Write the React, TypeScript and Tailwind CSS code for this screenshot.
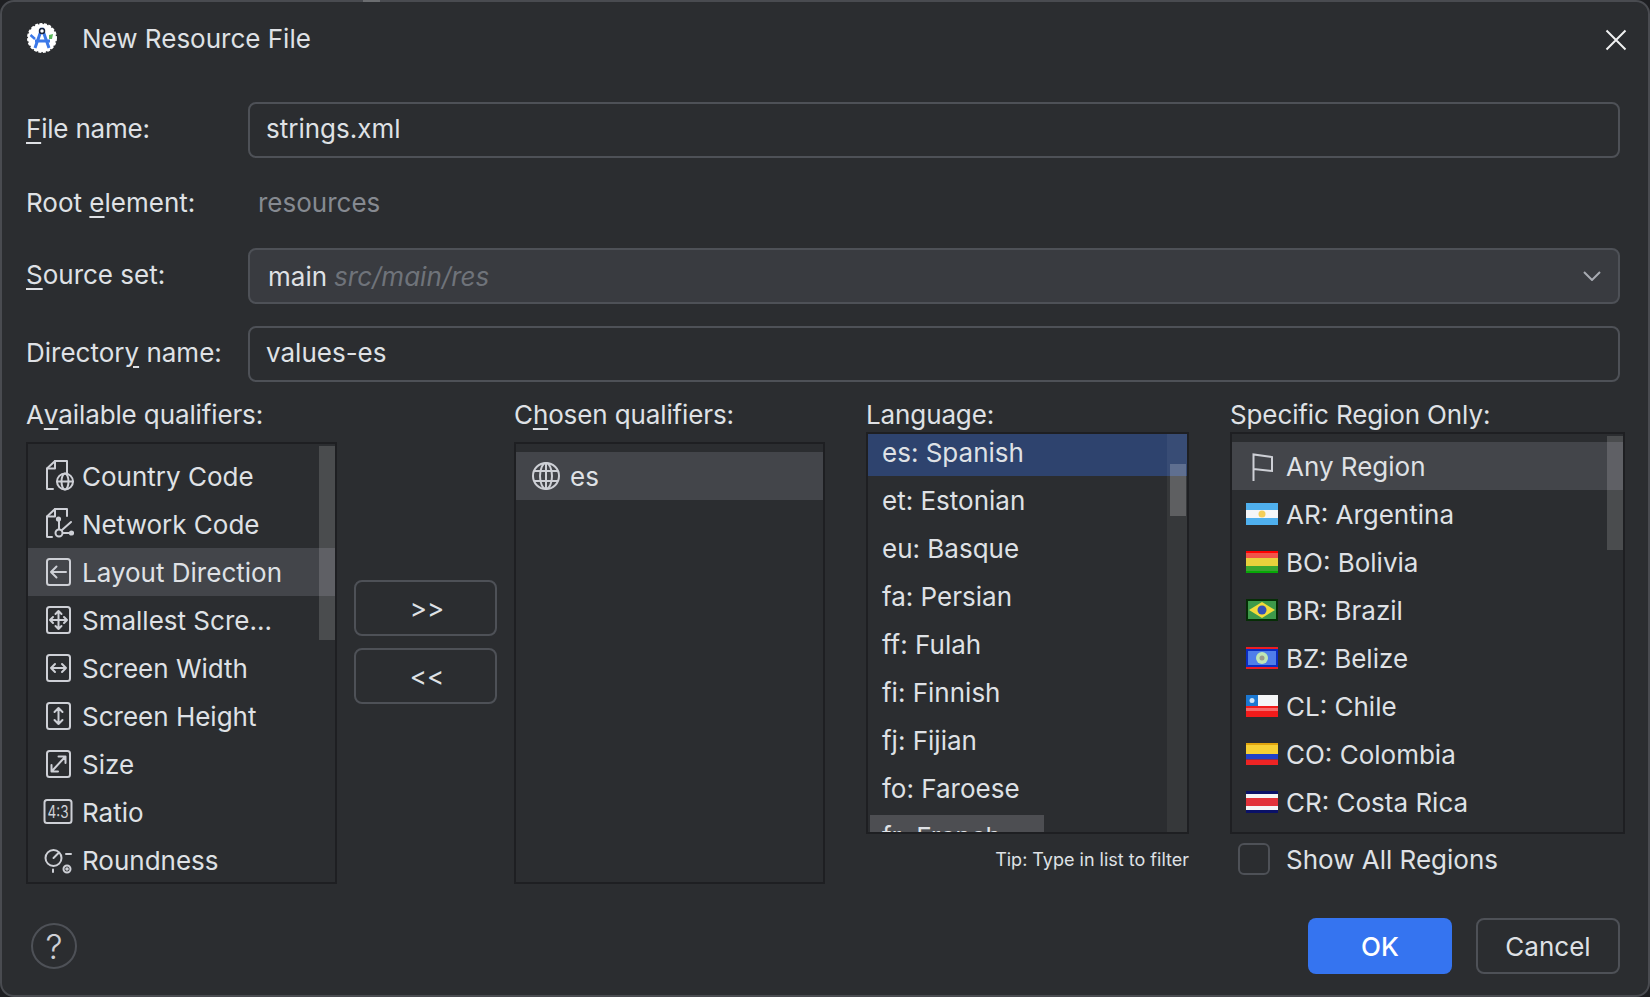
import type { ReactNode } from 'react'

const S = { fill: 'none', stroke: '#ced0d6', strokeWidth: 2, strokeLinecap: 'round', strokeLinejoin: 'round' } as const

function Ico({ children }: { children: ReactNode }) {
  return (
    <svg width="32" height="32" viewBox="0 0 32 32" className="shrink-0" aria-hidden>
      <g {...S}>{children}</g>
    </svg>
  )
}

const Frame = () => <rect x="5" y="3" width="23" height="26" rx="2.5" />

const icons: Record<string, ReactNode> = {
  country: (
    <Ico>
      <path d="M25 13V1H13L5 8.5V28.5a.5.5 0 0 0 .5.5H11" />
      <path d="M13 1v7.5H5" />
      <circle cx="23" cy="21.5" r="8" />
      <ellipse cx="23" cy="21.5" rx="3.5" ry="8" />
      <path d="M15 21.5h16" />
    </Ico>
  ),
  network: (
    <Ico>
      <path d="M25 8V1H13L5 8.5V28.5a.5.5 0 0 0 .5.5H10" />
      <path d="M13 1v7.5H5" />
      <circle cx="17" cy="25" r="3.5" />
      <path d="M17 21V11M20 22l9-8M21 25h8" />
      <circle cx="16.5" cy="11" r="1.6" fill="#ced0d6" />
      <circle cx="29.5" cy="25" r="1.6" fill="#ced0d6" />
    </Ico>
  ),
  layout: (
    <Ico>
      <Frame />
      <path d="M9 16h15M14.5 10.5 9 16l5.500 5.500" />
    </Ico>
  ),
  smallest: (
    <Ico>
      <Frame />
      <path d="M8 16h17M16.500 7v18M11 13l-3 3 3 3M22 13l3 3-3 3M13.500 10l3-3 3 3M13.500 22l3 3 3-3" />
    </Ico>
  ),
  width: (
    <Ico>
      <Frame />
      <path d="M9 16h15M13 12l-4 4 4 4M20 12l4 4-4 4" />
    </Ico>
  ),
  height: (
    <Ico>
      <Frame />
      <path d="M16.500 8v16M12.500 12l4-4 4 4M12.500 20l4 4 4-4" />
    </Ico>
  ),
  size: (
    <Ico>
      <Frame />
      <path d="M10 23 23 9M16.500 8.500H23.500V15M9.500 17v6.500H16" />
    </Ico>
  ),
  ratio: (
    <Ico>
      <rect x="2.500" y="4" width="27" height="23" rx="2.500" />
      <text x="16" y="21.500" textAnchor="middle" stroke="none" fill="#ced0d6" fontFamily="Inter, sans-serif" fontSize="17" textLength="21" lengthAdjust="spacingAndGlyphs">
        4:3
      </text>
    </Ico>
  ),
  round: (
    <Ico>
      <circle cx="11.500" cy="14" r="8" />
      <path d="M11.500 14l5-5M11 25.500V28M24 10h5" />
      <circle cx="25" cy="25" r="3.500" />
      <circle cx="25" cy="25" r="0.800" fill="#ced0d6" />
    </Ico>
  ),
}

const qualifiers = [
  ['country', 'Country Code'],
  ['network', 'Network Code'],
  ['layout', 'Layout Direction'],
  ['smallest', 'Smallest Scre...'],
  ['width', 'Screen Width'],
  ['height', 'Screen Height'],
  ['size', 'Size'],
  ['ratio', 'Ratio'],
  ['round', 'Roundness'],
]

const languages = ['es: Spanish', 'et: Estonian', 'eu: Basque', 'fa: Persian', 'ff: Fulah', 'fi: Finnish', 'fj: Fijian', 'fo: Faroese']

function Flag({ code }: { code: string }) {
  return (
    <svg width="32" height="22" viewBox="0 0 32 22" className="shrink-0" aria-hidden>
      {code === 'AR' && (
        <>
          <rect width="32" height="22" fill="#4fb0ee" />
          <rect y="7" width="32" height="8" fill="#f4f6f8" />
          <circle cx="16" cy="11" r="3.500" fill="#f3cf5a" />
        </>
      )}
      {code === 'BO' && (
        <>
          <rect width="32" height="22" fill="#e8d13c" />
          <rect width="32" height="7" fill="#f0534a" />
          <rect y="15" width="32" height="7" fill="#3aa52f" />
          <rect width="32" height="2" fill="#ff0000" />
          <rect y="20" width="32" height="2" fill="#06a806" />
        </>
      )}
      {code === 'BR' && (
        <>
          <rect width="32" height="22" fill="#062d06" />
          <rect x="2" y="2" width="28" height="18" fill="#3d9a4a" />
          <path d="M16 3 29 11 16 19 3 11Z" fill="#f2dc3a" />
          <circle cx="16" cy="11" r="4.500" fill="#3450b8" />
        </>
      )}
      {code === 'BZ' && (
        <>
          <rect width="32" height="22" fill="#ec1c24" />
          <rect y="2" width="32" height="18" fill="#0a2cc0" />
          <rect x="2" y="4" width="28" height="14" fill="#4f7eea" />
          <circle cx="16" cy="11" r="6" fill="#bfe6b4" />
          <circle cx="16" cy="11" r="2.500" fill="#9a9a8c" />
        </>
      )}
      {code === 'CL' && (
        <>
          <rect width="32" height="11" fill="#f4f5f6" />
          <rect y="11" width="32" height="11" fill="#f21b1b" />
          <rect x="0" y="0" width="12" height="11" fill="#1b78d2" />
          <circle cx="6" cy="5.500" r="2.500" fill="#cfe4f7" />
          <rect y="13" width="32" height="3" fill="#f56a6a" />
        </>
      )}
      {code === 'CO' && (
        <>
          <rect width="32" height="11" fill="#f6cf35" />
          <rect width="32" height="2" fill="#e0a40e" />
          <rect y="11" width="32" height="5.500" fill="#2140c8" />
          <rect y="16.500" width="32" height="5.500" fill="#ee2424" />
        </>
      )}
      {code === 'CR' && (
        <>
          <rect width="32" height="22" fill="#0a1168" />
          <rect y="3" width="32" height="16" fill="#f4f5f6" />
          <rect y="7" width="32" height="8" fill="#e2323a" />
        </>
      )}
    </svg>
  )
}

const regions = [
  ['AR', 'AR: Argentina'],
  ['BO', 'BO: Bolivia'],
  ['BR', 'BR: Brazil'],
  ['BZ', 'BZ: Belize'],
  ['CL', 'CL: Chile'],
  ['CO', 'CO: Colombia'],
  ['CR', 'CR: Costa Rica'],
]

function Mn({ children }: { children: ReactNode }) {
  return <span className="underline decoration-2 underline-offset-[4px]">{children}</span>
}

function ColLabel({ children }: { children: ReactNode }) {
  return <div className="flex h-[32px] items-center whitespace-nowrap pb-[4px] tracking-[-0.12px]">{children}</div>
}

function Logo() {
  return (
    <svg width="32" height="32" viewBox="0 0 32 32" className="shrink-0" aria-hidden>
      <circle cx="16" cy="16" r="14" fill="#fff" stroke="#fff" strokeWidth="2" strokeDasharray="3 1.500" />
      <path d="M23 13l4-1-1 5-3 0Z" fill="#5cb85c" />
      <path d="M16 6 9 26M16 6l7 20M9 19h15" fill="none" stroke="#3b78e8" strokeWidth="3" />
      <path d="M4.500 13 9 17" stroke="#3b78e8" strokeWidth="2.500" />
      <circle cx="16" cy="9" r="2.500" fill="#fff" stroke="#16233f" strokeWidth="1.500" />
    </svg>
  )
}

export default function App() {
  return (
    <div className="h-[997px] w-[1650px] overflow-hidden bg-[#1e1f22] font-['Inter',sans-serif] text-[26px] text-[#dfe1e5]">
      <div className="relative flex h-full w-full flex-col rounded-[14px] border-2 border-[#494b50] bg-[#2b2d30] pl-[24px] pr-[28px]">
        <div className="absolute -top-[2px] left-[361px] h-[2px] w-[17px] bg-[#6b6d70]" />
        <div className="mb-[28px] flex h-[72px] items-center">
          <Logo />
          <span className="ml-[24px]">New Resource File</span>
          <svg width="22" height="22" viewBox="0 0 22 22" className="ml-auto mr-[-7px] mt-[4px]" aria-hidden>
            <path d="M1.500 1.500l19 19M20.500 1.500l-19 19" stroke="#f0f1f2" strokeWidth="2" />
          </svg>
        </div>

        <div className="flex h-[56px] items-center">
          <label className="w-[222px] pb-[4px] tracking-[-0.2px]">
            <Mn>F</Mn>ile name:
          </label>
          <div className="flex h-full flex-1 items-center rounded-[8px] border-2 border-[#4e5157] pb-[3px] pl-[16px]">strings.xml</div>
        </div>

        <div className="flex h-[90px] items-center">
          <label className="w-[222px] pb-[2px]">
            Root <Mn>e</Mn>lement:
          </label>
          <span className="ml-[10px] pb-[2px] text-[#868a91]">resources</span>
        </div>

        <div className="flex h-[56px] items-center">
          <label className="w-[222px] pb-[4px]">
            <Mn>S</Mn>ource set:
          </label>
          <div className="flex h-full flex-1 items-center rounded-[8px] border-2 border-[#4e5157] bg-[#393b40] pl-[18px] pr-[17px]">
            main <span className="ml-[7px] italic text-[#6f737a]">src/main/res</span>
            <svg width="18" height="10" viewBox="0 0 18 10" className="ml-auto" aria-hidden>
              <path d="M1 1l8 8 8-8" fill="none" stroke="#a8abb2" strokeWidth="2" />
            </svg>
          </div>
        </div>

        <div className="mt-[22px] flex h-[56px] items-center">
          <label className="w-[222px] pb-[4px]">
            Director<Mn>y</Mn> name:
          </label>
          <div className="flex h-full flex-1 items-center rounded-[8px] border-2 border-[#4e5157] pb-[3px] pl-[16px]">values-es</div>
        </div>

        <div className="mt-[18px] flex">
          <div className="w-[311px] flex-none">
            <ColLabel>
              A<Mn>v</Mn>ailable qualifiers:
            </ColLabel>
            <div className="relative mt-[10px] h-[442px] overflow-hidden border-2 border-[#1e1f22] pt-[8px]">
              {qualifiers.map(([key, label]) => (
                <div key={key} className={`flex h-[48px] items-center pl-[14px] ${key === 'layout' ? 'bg-[#43454a]' : ''}`}>
                  {icons[key]}
                  <span className="ml-[8px]">{label}</span>
                </div>
              ))}
              <div className="absolute right-0 top-[2px] h-[194px] w-[16px] bg-white/15" />
            </div>
          </div>

          <div className="ml-[17px] flex w-[143px] flex-none flex-col gap-[12px] pt-[180px]">
            <button className="h-[56px] rounded-[8px] border-2 border-[#4e5157] pl-[3px]">&gt;&gt;</button>
            <button className="h-[56px] rounded-[8px] border-2 border-[#4e5157] pl-[3px]">&lt;&lt;</button>
          </div>

          <div className="ml-[17px] w-[311px] flex-none">
            <ColLabel>
              C<Mn>h</Mn>osen qualifiers:
            </ColLabel>
            <div className="mt-[10px] h-[442px] overflow-hidden border-2 border-[#1e1f22] pt-[8px]">
              <div className="flex h-[48px] items-center bg-[#43454a] pl-[16px]">
                <svg width="28" height="28" viewBox="0 0 28 28" className="shrink-0" aria-hidden>
                  <g fill="none" stroke="#ced0d6" strokeWidth="2">
                    <circle cx="14" cy="14" r="13" />
                    <ellipse cx="14" cy="14" rx="6" ry="13" />
                    <path d="M14 1v26M2 9h24M2 19h24" />
                  </g>
                </svg>
                <span className="ml-[10px]">es</span>
              </div>
            </div>
          </div>

          <div className="ml-[41px] w-[323px] flex-none">
            <ColLabel>Language:</ColLabel>
            <div className="relative h-[402px] overflow-hidden border-2 border-[#1e1f22]">
              <div className="-mt-[6px]">
                {languages.map((label, i) => (
                  <div key={label} className={`flex h-[48px] items-center pl-[14px] ${i === 0 ? 'bg-[#2e436e]' : ''}`}>
                    {label}
                  </div>
                ))}
                <div className="relative flex h-[48px] items-center pl-[14px]">
                  <div className="absolute left-[2px] top-[3px] h-[20px] w-[174px] bg-[#4d4e52]" />
                  <span className="relative">fr: French</span>
                </div>
              </div>
              <div className="absolute bottom-0 right-0 top-0 w-[20px] bg-white/5" />
              <div className="absolute right-[1px] top-[30px] h-[52px] w-[16px] bg-white/20" />
            </div>
            <div className="flex h-[50px] items-center justify-end text-[18px]">Tip: Type in list to filter</div>
          </div>

          <div className="ml-[41px] w-[395px] flex-none">
            <ColLabel>Specific Region Only:</ColLabel>
            <div className="relative h-[402px] overflow-hidden border-2 border-[#1e1f22] pt-[8px]">
              <div className="flex h-[48px] items-center bg-[#43454a] pl-[14px]">
                <svg width="32" height="32" viewBox="0 0 32 32" className="shrink-0" aria-hidden>
                  <path d="M7.500 31V4.500L26 7V21L7.500 19" fill="none" stroke="#ced0d6" strokeWidth="2" />
                </svg>
                <span className="ml-[8px]">Any Region</span>
              </div>
              {regions.map(([code, label]) => (
                <div key={code} className="flex h-[48px] items-center pl-[14px]">
                  <Flag code={code} />
                  <span className="ml-[8px]">{label}</span>
                </div>
              ))}
              <div className="absolute right-0 top-[2px] h-[114px] w-[16px] bg-white/15" />
            </div>
            <div className="flex h-[50px] items-center pl-[8px]">
              <span className="h-[32px] w-[32px] rounded-[6px] border-2 border-[#4e5157]" />
              <span className="ml-[16px]">Show All Regions</span>
            </div>
          </div>
        </div>

        <div className="mt-[34px] flex h-[56px] items-center">
          <span className="ml-[5px] flex h-[46px] w-[46px] items-center justify-center rounded-full border-2 border-[#4e5157] text-[34px] font-light text-[#ced0d6]">?</span>
          <button className="ml-auto h-[56px] w-[144px] rounded-[8px] bg-[#3574f0] font-medium text-white">OK</button>
          <button className="ml-[24px] h-[56px] w-[144px] rounded-[8px] border-2 border-[#4e5157]">Cancel</button>
        </div>
      </div>
    </div>
  )
}
